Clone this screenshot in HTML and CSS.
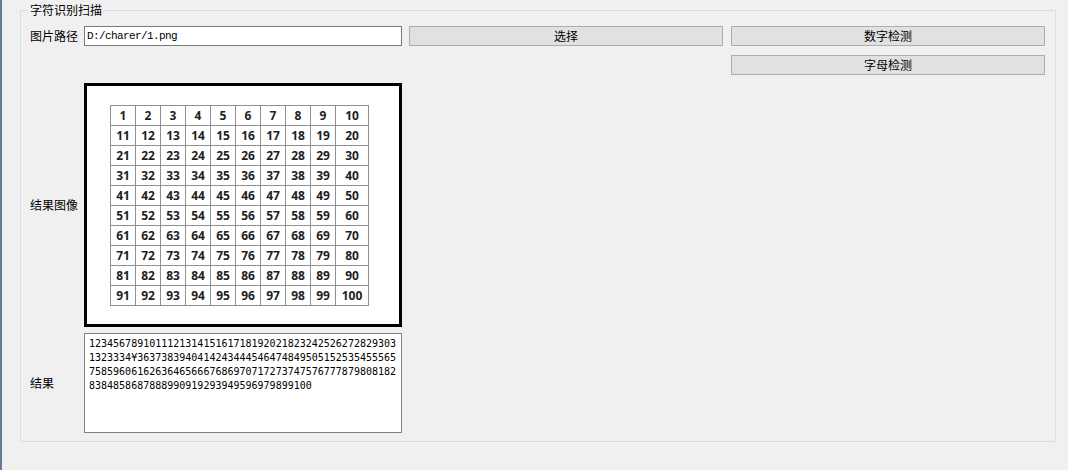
FILE: index.html
```html
<!DOCTYPE html>
<html lang="zh">
<head>
<meta charset="utf-8">
<title>字符识别扫描</title>
<link rel="stylesheet" href="styles.css">
</head>
<body>
<div class="window">
  <div class="group">
    <div class="group-title">字符识别扫描</div>
    <div class="form">
      <div class="label">图片路径</div>
      <div class="path-input">D:/charer/1.png</div>
      <button class="btn btn-select">选择</button>
      <button class="btn btn-right">数字检测</button>

      <button class="btn btn-right row2">字母检测</button>

      <div class="label row3">结果图像</div>
      <div class="picture row3">
        <div class="num-grid">
          <span>1</span><span>2</span><span>3</span><span>4</span><span>5</span><span>6</span><span>7</span><span>8</span><span>9</span><span>10</span>
          <span>11</span><span>12</span><span>13</span><span>14</span><span>15</span><span>16</span><span>17</span><span>18</span><span>19</span><span>20</span>
          <span>21</span><span>22</span><span>23</span><span>24</span><span>25</span><span>26</span><span>27</span><span>28</span><span>29</span><span>30</span>
          <span>31</span><span>32</span><span>33</span><span>34</span><span>35</span><span>36</span><span>37</span><span>38</span><span>39</span><span>40</span>
          <span>41</span><span>42</span><span>43</span><span>44</span><span>45</span><span>46</span><span>47</span><span>48</span><span>49</span><span>50</span>
          <span>51</span><span>52</span><span>53</span><span>54</span><span>55</span><span>56</span><span>57</span><span>58</span><span>59</span><span>60</span>
          <span>61</span><span>62</span><span>63</span><span>64</span><span>65</span><span>66</span><span>67</span><span>68</span><span>69</span><span>70</span>
          <span>71</span><span>72</span><span>73</span><span>74</span><span>75</span><span>76</span><span>77</span><span>78</span><span>79</span><span>80</span>
          <span>81</span><span>82</span><span>83</span><span>84</span><span>85</span><span>86</span><span>87</span><span>88</span><span>89</span><span>90</span>
          <span>91</span><span>92</span><span>93</span><span>94</span><span>95</span><span>96</span><span>97</span><span>98</span><span>99</span><span>100</span>
        </div>
      </div>

      <div class="label row4">结果</div>
      <div class="result row4">
        <div class="line">123456789101112131415161718192021823242526272829303</div>
        <div class="line">1323334¥3637383940414243444546474849505152535455565</div>
        <div class="line">758596061626364656667686970717273747576777879808182</div>
        <div class="line">8384858687888990919293949596979899100</div>
      </div>
    </div>
  </div>
</div>
</body>
</html>
```

FILE: styles.css
```css
html, body {
  margin: 0;
  padding: 0;
}
body {
  background: #f0f0f0;
  width: 1068px;
  height: 470px;
  overflow: hidden;
  font-family: "Noto Sans CJK SC", "Liberation Sans", sans-serif;
  font-size: 12px;
  color: #000;
}
.window {
  height: 470px;
  border-left: 2px solid #5d7d98;
  box-sizing: border-box;
  padding-top: 10px;
}
.group {
  position: relative;
  margin: 0 12px 0 18px;
  border: 1px solid #dcdcdc;
  padding: 15px 10px 8px 9px;
}
.group-title {
  position: absolute;
  top: -9px;
  left: 7px;
  padding: 0 2px;
  line-height: 16px;
  background: #f0f0f0;
}
.form {
  display: grid;
  grid-template-columns: 54px 318px 321px 322px;
  align-items: start;
}
.label {
  align-self: center;
  line-height: 16px;
  white-space: nowrap;
}
.path-input {
  height: 20px;
  box-sizing: border-box;
  border: 1px solid #7a7a7a;
  background: #fff;
  padding-left: 2px;
  font-family: "Liberation Mono", monospace;
  font-size: 11px;
  letter-spacing: -0.6px;
  line-height: 18px;
}
.btn {
  width: 314px;
  height: 20px;
  box-sizing: border-box;
  border: 1px solid #adadad;
  background: #e1e1e1;
  font-family: "Noto Sans CJK SC", sans-serif;
  font-size: 12px;
  line-height: 16px;
  color: #000;
  padding: 0;
  justify-self: end;
}
.row2 {
  grid-column: 4;
  margin-top: 9px;
}
.row3 {
  margin-top: 8px;
}
.row4 {
  margin-top: 6px;
}
.label.row3, .label.row4 {
  grid-column: 1;
}
.picture {
  grid-column: 2;
  height: 244px;
  box-sizing: border-box;
  border: 3px solid #000;
  background: #fff;
  padding: 19px 0 0 23px;
}
.num-grid {
  display: grid;
  grid-template-columns: repeat(9, 24px) 32px;
  grid-auto-rows: 19px;
  gap: 1px;
  padding: 1px;
  background: #909090;
  width: max-content;
}
.num-grid span {
  background: #fff;
  display: flex;
  align-items: center;
  justify-content: center;
  font-family: "Open Sans", "Liberation Sans", sans-serif;
  font-weight: 700;
  font-size: 12px;
  color: #1e1e1e;
}
.result {
  grid-column: 2;
  height: 100px;
  box-sizing: border-box;
  border: 1px solid #828282;
  background: #fff;
  padding: 3px 4px;
  font-family: "DejaVu Sans Mono", monospace;
  font-size: 10px;
  line-height: 14px;
}
.line {
  white-space: nowrap;
}
```
